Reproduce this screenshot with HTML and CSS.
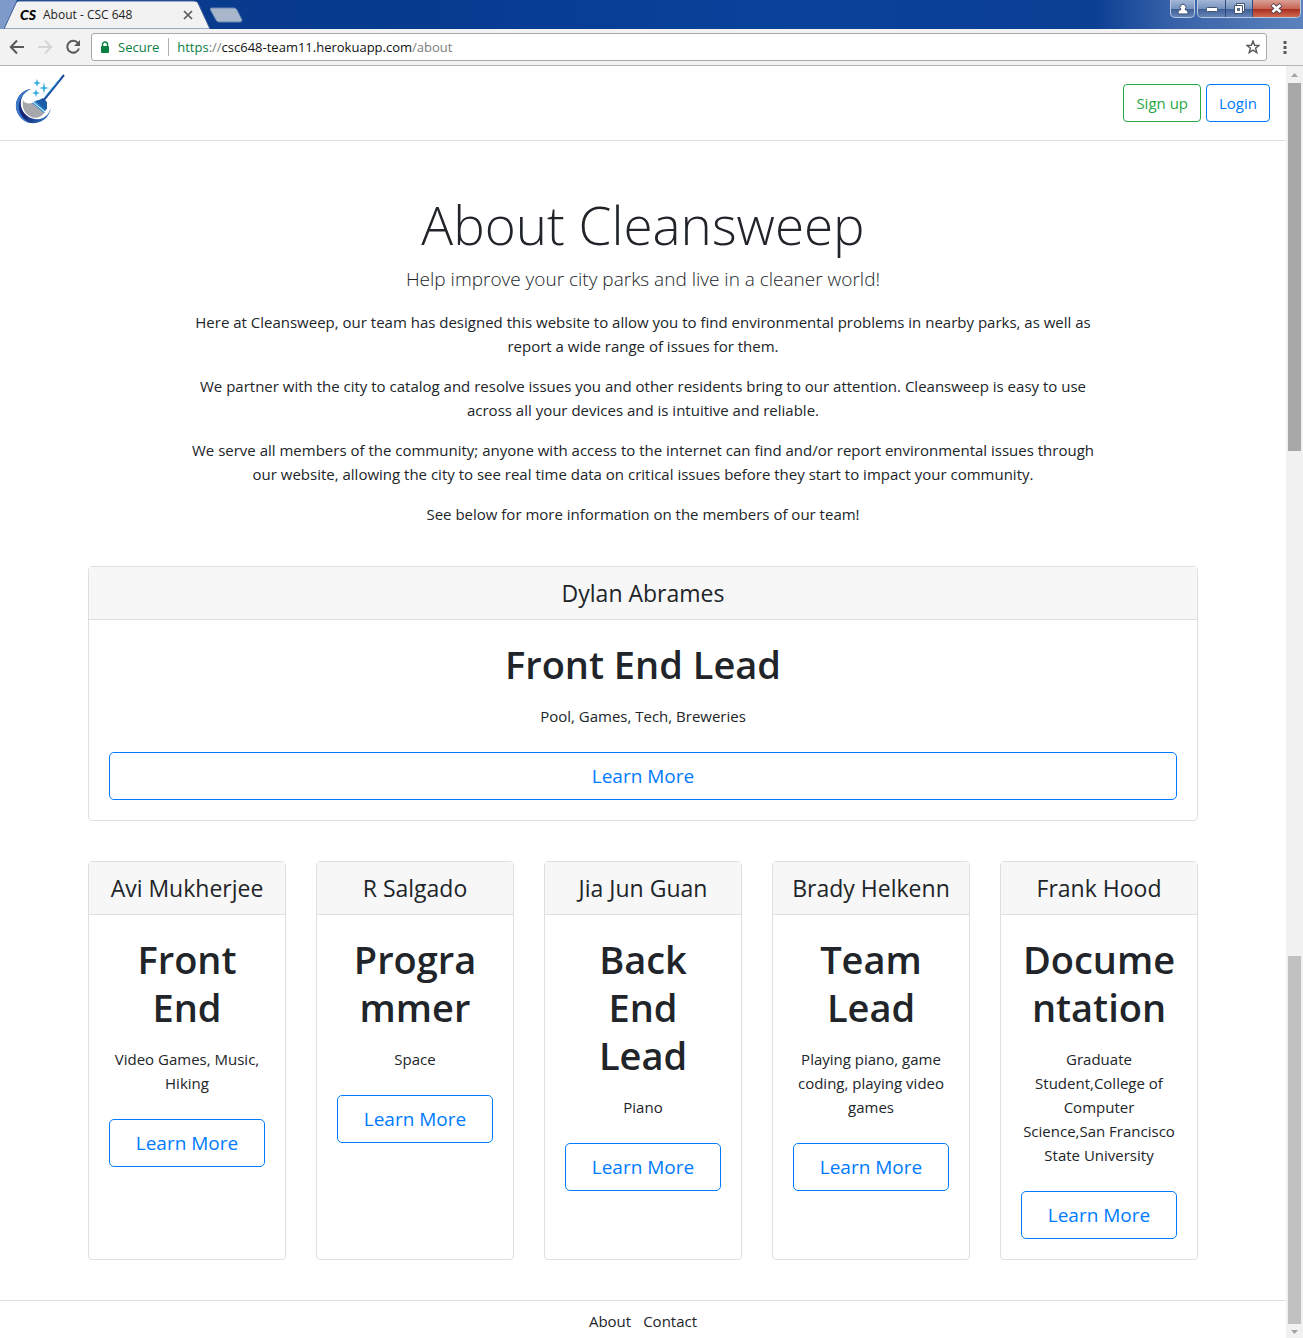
FILE: index.html
```html
<!DOCTYPE html>
<html lang="en">
<head>
<meta charset="utf-8">
<title>About - CSC 648</title>
<link rel="stylesheet" href="styles.css">
</head>
<body>
<header class="browser">
  <div class="titlebar">
    <div class="tab">
      <svg class="tab-shape" width="210" height="29" viewBox="0 0 210 29" aria-hidden="true"><path d="M0 29V0H17L5 29z" fill="#7e9acb"/><path d="M4 29L16 3Q17 1 19 1H194Q197 1 198 3L210 29z" fill="#f2f2f2" stroke="#405f98"/></svg>
      <span class="favicon">CS</span>
      <span class="tab-title">About - CSC 648</span>
      <button class="tab-close" aria-label="Close tab"><svg width="10" height="10" viewBox="0 0 10 10"><path d="M1 1L9 9M9 1L1 9" stroke="#5a5a5a" stroke-width="1.700"/></svg></button>
    </div>
    <button class="new-tab" aria-label="New tab"><svg width="34" height="16" viewBox="0 0 34 16"><path d="M1 1H24Q26 1 27 3L32 13Q32 15 30 15H9Q7 15 6 13L0 2z" fill="#a9b7cc" stroke="#6685b5"/></svg></button>
    <div class="window-controls">
      <button class="control user" aria-label="Profile"><svg width="12" height="12" viewBox="0 0 12 12"><path d="M1 11V9Q1 7 4 6.500A3 3 0 1 1 8 6.500Q11 7 11 9V11z" fill="#fff" stroke="#34466b"/></svg></button>
      <div class="control-group">
        <button class="control minimize" aria-label="Minimize"><svg width="12" height="6" viewBox="0 0 12 6"><rect x=".5" y="1.500" width="11" height="4" rx="1" fill="#fff" stroke="#44546f"/></svg></button>
        <button class="control restore" aria-label="Restore"><svg width="13" height="13" viewBox="0 0 13 13"><path d="M3.500 1.500H11.500V9.500H3.500z" fill="#fff" stroke="#44546f"/><path d="M1.500 3.500H9.500V11.500H1.500z" fill="#fff" stroke="#44546f"/><path d="M4.500 6.500H6.500V8.500H4.500z" fill="#8090aa" stroke="#44546f"/></svg></button>
        <button class="control close" aria-label="Close"><svg width="13" height="11" viewBox="0 0 13 11"><path d="M2 1.500L11 9.500M11 1.500L2 9.500" stroke="#55404a" stroke-width="4.500"/><path d="M2.500 2L10.500 9M10.500 2L2.500 9" stroke="#fff" stroke-width="2.600"/></svg></button>
      </div>
    </div>
  </div>
  <div class="toolbar">
    <button class="tool" aria-label="Back"><svg width="16" height="16" viewBox="0 0 16 16"><path d="M15 8H2M8 1.500L1.800 8L8 14.500" fill="none" stroke="#5a5a5a" stroke-width="2"/></svg></button>
    <button class="tool" aria-label="Forward"><svg width="16" height="16" viewBox="0 0 16 16"><path d="M1 8H14M8 1.500L14.200 8L8 14.500" fill="none" stroke="#d5d5d5" stroke-width="2"/></svg></button>
    <button class="tool" aria-label="Reload"><svg width="16" height="16" viewBox="0 0 16 16"><path d="M13 4A6 6 0 1 0 14 9.500" fill="none" stroke="#5a5a5a" stroke-width="2"/><path d="M15 1V7H9z" fill="#5a5a5a"/></svg></button>
    <div class="address">
      <svg width="10" height="13" viewBox="0 0 10 13" aria-hidden="true"><path d="M2.500 6V3.500A2.500 2.500 0 0 1 7.500 3.500V6" fill="none" stroke="#0b8043" stroke-width="1.400"/><rect x="1" y="5" width="8" height="7" rx="1" fill="#0b8043"/></svg>
      <span class="secure">Secure</span>
      <span class="url"><span class="scheme">https</span><span class="muted">://</span>csc648-team11.herokuapp.com<span class="muted">/about</span></span>
      <button class="star" aria-label="Bookmark"><svg width="14" height="14" viewBox="0 0 14 14"><path d="M7 1L8.600 5.200L13 5.400L9.600 8.200L10.800 12.600L7 10.100L3.200 12.600L4.400 8.200L1 5.400L5.400 5.200z" fill="none" stroke="#5a5a5a" stroke-width="1.400"/></svg></button>
    </div>
    <button class="menu" aria-label="Menu"><svg width="4" height="14" viewBox="0 0 4 14"><path d="M.5 1h3v3h-3zM.5 6h3v3h-3zM.5 11h3v3h-3z" fill="#5a5a5a"/></svg></button>
  </div>
</header>
<div class="viewport">
  <div class="page">
    <nav class="navbar">
      <a href="#" class="brand" aria-label="Cleansweep">
        <svg width="52" height="52" viewBox="0 0 52 52">
          <defs><linearGradient id="ring" x1="0" y1="0" x2="1" y2="1"><stop offset="0" stop-color="#1e4fa8"/><stop offset=".5" stop-color="#151f70"/><stop offset="1" stop-color="#2d85d2"/></linearGradient></defs>
          <path d="M16 15C9 17 5 24 6 32C8 42 19 48 28 44C32 42 34 39 36 34C34 45 25 50 15 49C5 46 0 38 1 29C3 21 8 16 16 15z" fill="url(#ring)"/>
          <path d="M16 15C5 17 0 26 1 34C3 43 9 48 15 49C6 44 3 37 4 29C6 22 10 18 16 15z" fill="#3c79c8"/>
          <path d="M8 26C9 29 13 30 17 29C20 28 23 32 30 38C26 44 19 46 13 41C8 37 7 31 8 26z" fill="#a7a8ac"/>
          <path d="M17 29L29 39L31 36L20 27z" fill="#2f8fd2"/><path d="M18 28L30 38" stroke="#fff"/>
          <path d="M20 27Q25 26 28 24L32 28Q32 32 32 35L30 36z" fill="#1c5ea8"/>
          <path d="M28 27L49 1" stroke="#1b4b9b" stroke-width="2"/><path d="M30 23L45 5" stroke="#229be0"/>
          <path d="M29 8L30 13L34 14L30 15L29 20L28 15L24 14L28 13zM22 5L23 8L26 9L23 10L22 13L21 10L18 9L21 8zM21 15L22 18L25 19L22 20L21 23L20 20L17 19L20 18z" fill="#35ace2"/>
        </svg>
      </a>
      <div class="actions"><button class="btn green">Sign up</button><button class="btn">Login</button></div>
    </nav>
    <main class="container">
      <section class="intro">
        <h1>About Cleansweep</h1>
        <p class="lead">Help improve your city parks and live in a cleaner world!</p>
        <p>Here at Cleansweep, our team has designed this website to allow you to find environmental problems in nearby parks, as well as report a wide range of issues for them.</p>
        <p>We partner with the city to catalog and resolve issues you and other residents bring to our attention. Cleansweep is easy to use across all your devices and is intuitive and reliable.</p>
        <p>We serve all members of the community; anyone with access to the internet can find and/or report environmental issues through our website, allowing the city to see real time data on critical issues before they start to impact your community.</p>
        <p>See below for more information on the members of our team!</p>
      </section>
      <section class="card">
        <h2>Dylan Abrames</h2>
        <div class="card-body"><h3>Front End Lead</h3><p>Pool, Games, Tech, Breweries</p><button class="btn large">Learn More</button></div>
      </section>
      <div class="team">
        <section class="card">
          <h2>Avi Mukherjee</h2>
          <div class="card-body"><h3>Front End</h3><p>Video Games, Music, Hiking</p><button class="btn large">Learn More</button></div>
        </section>
        <section class="card">
          <h2>R Salgado</h2>
          <div class="card-body"><h3>Progra<wbr>mmer</h3><p>Space</p><button class="btn large">Learn More</button></div>
        </section>
        <section class="card">
          <h2>Jia Jun Guan</h2>
          <div class="card-body"><h3>Back End Lead</h3><p>Piano</p><button class="btn large">Learn More</button></div>
        </section>
        <section class="card">
          <h2>Brady Helkenn</h2>
          <div class="card-body"><h3>Team Lead</h3><p>Playing piano, game coding, playing video games</p><button class="btn large">Learn More</button></div>
        </section>
        <section class="card">
          <h2>Frank Hood</h2>
          <div class="card-body"><h3>Docume<wbr>ntation</h3><p>Graduate Student,College of Computer Science,San Francisco State University</p><button class="btn large">Learn More</button></div>
        </section>
      </div>
    </main>
    <footer class="footer"><a href="#">About</a><a href="#">Contact</a></footer>
  </div>
  <div class="scrollbar" aria-hidden="true">
    <svg class="arrow" width="17" height="17" viewBox="0 0 17 17"><path d="M5 11L8.500 7L12 11z" fill="#a3a3a3"/></svg>
    <div class="thumb active"></div>
    <div class="track"></div>
    <div class="thumb"></div>
    <svg class="arrow" width="17" height="14" viewBox="0 0 17 14"><path d="M5 6L8.500 10L12 6z" fill="#a3a3a3"/></svg>
  </div>
</div>
</body>
</html>
```
FILE: styles.css
```css
* { box-sizing: border-box; }

body {
  margin: 0;
  min-height: 100vh;
  display: flex;
  flex-direction: column;
  background: #fff;
  color: #212529;
  font: 15px/24px "Open Sans", "Noto Sans", sans-serif;
}

h1, h2, h3, p { margin: 0; }
button { font: inherit; padding: 0; border: 0; background: none; }
svg { display: block; flex: none; }

/* Browser window */
.titlebar {
  height: 29px;
  display: flex;
  align-items: flex-start;
  background: linear-gradient(90deg, #0b3c8c 0, #063a8f 30%, #0a429b 60%, #0b3f94 84%, #3762a8 90%, #5b82bc 100%);
}
.tab {
  position: relative;
  width: 210px;
  height: 29px;
  padding-left: 20px;
  display: flex;
  align-items: center;
  font-size: 12px;
  color: #222;
}
.tab-shape { position: absolute; left: 0; top: 0; }
.favicon {
  position: relative;
  width: 23px;
  color: #000;
  font: italic 900 14px/20px Lato, sans-serif;
}
.tab-title { position: relative; flex: 1; }
.tab-close { position: relative; margin-right: 17px; }
.new-tab { margin-top: 7px; }
.window-controls { display: flex; gap: 2px; margin: 0 2px 0 auto; }
.control {
  height: 18px;
  display: flex;
  align-items: center;
  justify-content: center;
  background: linear-gradient(#a4b7d6 0, #7893be 50%, #3d5d94 51%, #6585b8 100%);
}
.user { width: 25px; border: 1px solid #b9c9e2; border-top: 0; border-radius: 0 0 5px 5px; }
.control-group {
  display: flex;
  overflow: hidden;
  border: 1px solid #b9c9e2;
  border-top: 0;
  border-radius: 0 0 5px 5px;
}
.control-group .control { height: 17px; }
.minimize { width: 28px; border-right: 1px solid #2f4a7c; }
.restore { width: 27px; border-right: 1px solid #2f4a7c; }
.close { width: 47px; background: linear-gradient(#d9a095 0, #c76657 50%, #a82a1b 51%, #cf6a50 100%); }

.toolbar {
  height: 37px;
  display: flex;
  align-items: center;
  gap: 12px;
  padding: 0 16px 0 9px;
  background: #f2f2f2;
  border-bottom: 1px solid #b3b3b3;
}
.address {
  flex: 1;
  height: 28px;
  margin: 0 4px 0 -2px;
  padding: 0 6px 0 8px;
  display: flex;
  align-items: center;
  background: #fff;
  border: 1px solid #a9a9a9;
  border-radius: 3px;
  font-size: 13px;
  line-height: 18px;
  color: #111;
}
.secure { margin-left: 8px; padding-right: 9px; border-right: 1px solid #b0b0b0; color: #0b8043; }
.url { flex: 1; padding-left: 8px; }
.scheme { color: #0b8043; }
.muted { color: #808080; }

/* Site */
.viewport { flex: 1; display: flex; }
.page { flex: 1; min-width: 0; }
.navbar {
  height: 75px;
  display: flex;
  align-items: center;
  justify-content: space-between;
  padding: 0 16px;
  border-bottom: 1px solid #dfdfdf;
}
.brand { margin: -6px 0 0 -1px; }
.actions { display: flex; gap: 5px; }
.btn {
  height: 38px;
  padding: 0 12px;
  border: 1px solid #007bff;
  border-radius: 4px;
  color: #007bff;
}
.btn.green { border-color: #28a745; color: #28a745; }

.container { max-width: 1142px; margin: 0 auto; padding: 0 16px; text-align: center; }
.intro {
  max-width: 920px;
  margin: 0 auto;
  padding: 50px 0 40px;
  display: flex;
  flex-direction: column;
  gap: 16px;
}
.intro h1 { font-size: 53px; line-height: 67px; font-weight: 300; }
.lead { margin-top: -10px; font-size: 19px; line-height: 30px; font-weight: 300; }

.card { border: 1px solid #dfdfdf; border-radius: 4px; }
.card h2 {
  padding: 12px 0;
  background: #f7f7f7;
  border-bottom: 1px solid #dfdfdf;
  font-size: 23px;
  line-height: 28px;
  font-weight: 400;
}
.card-body { padding: 20px; display: flex; flex-direction: column; }
.card h3 { font-size: 38px; line-height: 48px; font-weight: 600; }
.card p { margin: 16px 0 24px; }
.btn.large { height: 48px; border-radius: 5px; font-size: 19px; }
.team { display: grid; grid-template-columns: repeat(5, 1fr); gap: 30px; margin: 40px 0; }

.footer {
  display: flex;
  justify-content: center;
  gap: 12px;
  padding: 8px 0 5px;
  border-top: 1px solid #dfdfdf;
}
.footer a { color: inherit; text-decoration: none; }

.scrollbar { width: 17px; display: flex; flex-direction: column; background: #f1f1f1; }
.thumb { height: 368px; margin: 0 2px; background: #c1c1c1; }
.thumb.active { background: #a8a8a8; }
.track { flex: 1; }
```
